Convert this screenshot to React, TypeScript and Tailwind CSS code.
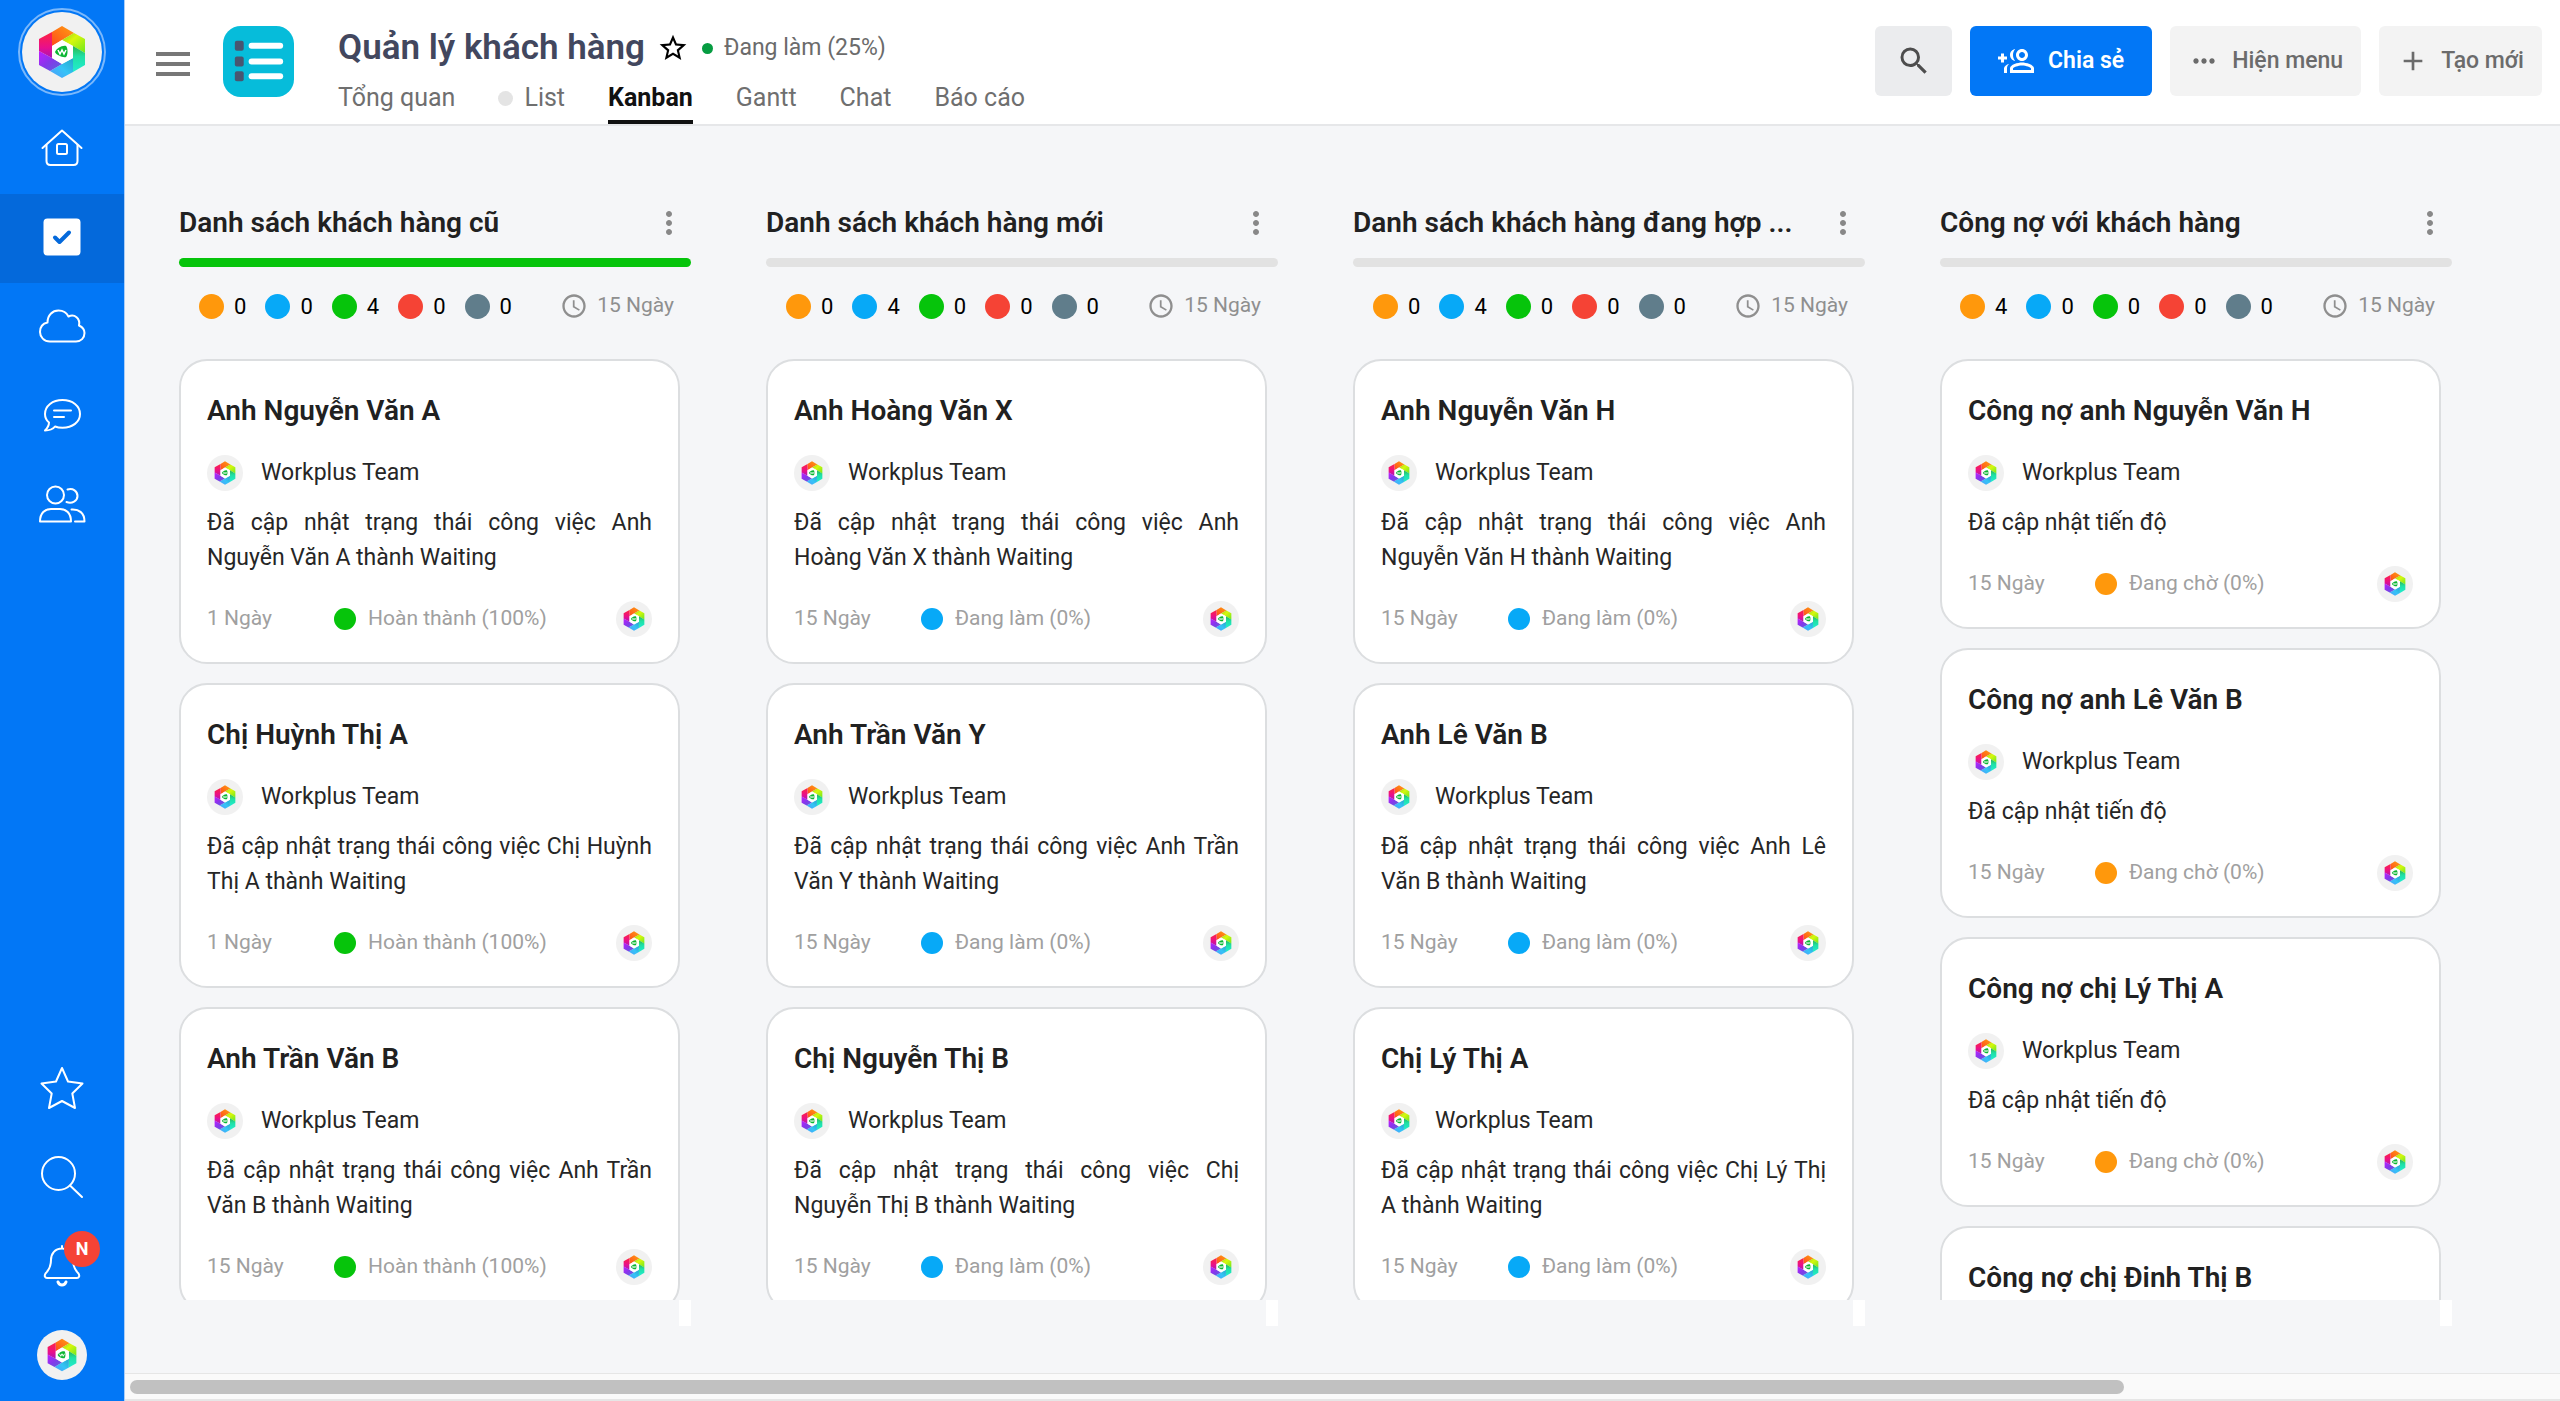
import React from 'react';
import { MdOutlineGroupAdd, MdSearch, MdMoreHoriz, MdStarBorder, MdAdd, MdMoreVert, MdAccessTime } from 'react-icons/md';

type Status = 'waiting' | 'doing' | 'done' | 'late' | 'paused';

interface Task {
  title: string;
  message: string;
  days: string;
}

interface Column {
  title: string;
  counts: [number, number, number, number, number];
  done?: boolean;
  status: Status;
  label: string;
  tasks: Task[];
}

const DOTS: Record<Status, string> = {
  waiting: 'bg-[#ff980c]',
  doing: 'bg-[#07a9f7]',
  done: 'bg-[#06c40b]',
  late: 'bg-[#f54335]',
  paused: 'bg-[#607d8b]'
};

const STATUSES: Status[] = ['waiting', 'doing', 'done', 'late', 'paused'];

const COLUMNS: Column[] = [
  {
    title: 'Danh sách khách hàng cũ',
    counts: [0, 0, 4, 0, 0],
    done: true,
    status: 'done',
    label: 'Hoàn thành (100%)',
    tasks: [
      { title: 'Anh Nguyễn Văn A', message: 'Đã cập nhật trạng thái công việc Anh Nguyễn Văn A thành Waiting', days: '1 Ngày' },
      { title: 'Chị Huỳnh Thị A', message: 'Đã cập nhật trạng thái công việc Chị Huỳnh Thị A thành Waiting', days: '1 Ngày' },
      { title: 'Anh Trần Văn B', message: 'Đã cập nhật trạng thái công việc Anh Trần Văn B thành Waiting', days: '15 Ngày' }
    ]
  },
  {
    title: 'Danh sách khách hàng mới',
    counts: [0, 4, 0, 0, 0],
    status: 'doing',
    label: 'Đang làm (0%)',
    tasks: [
      { title: 'Anh Hoàng Văn X', message: 'Đã cập nhật trạng thái công việc Anh Hoàng Văn X thành Waiting', days: '15 Ngày' },
      { title: 'Anh Trần Văn Y', message: 'Đã cập nhật trạng thái công việc Anh Trần Văn Y thành Waiting', days: '15 Ngày' },
      { title: 'Chị Nguyễn Thị B', message: 'Đã cập nhật trạng thái công việc Chị Nguyễn Thị B thành Waiting', days: '15 Ngày' }
    ]
  },
  {
    title: 'Danh sách khách hàng đang hợp ...',
    counts: [0, 4, 0, 0, 0],
    status: 'doing',
    label: 'Đang làm (0%)',
    tasks: [
      { title: 'Anh Nguyễn Văn H', message: 'Đã cập nhật trạng thái công việc Anh Nguyễn Văn H thành Waiting', days: '15 Ngày' },
      { title: 'Anh Lê Văn B', message: 'Đã cập nhật trạng thái công việc Anh Lê Văn B thành Waiting', days: '15 Ngày' },
      { title: 'Chị Lý Thị A', message: 'Đã cập nhật trạng thái công việc Chị Lý Thị A thành Waiting', days: '15 Ngày' }
    ]
  },
  {
    title: 'Công nợ với khách hàng',
    counts: [4, 0, 0, 0, 0],
    status: 'waiting',
    label: 'Đang chờ (0%)',
    tasks: [
      { title: 'Công nợ anh Nguyễn Văn H', message: 'Đã cập nhật tiến độ', days: '15 Ngày' },
      { title: 'Công nợ anh Lê Văn B', message: 'Đã cập nhật tiến độ', days: '15 Ngày' },
      { title: 'Công nợ chị Lý Thị A', message: 'Đã cập nhật tiến độ', days: '15 Ngày' },
      { title: 'Công nợ chị Đinh Thị B', message: 'Đã cập nhật tiến độ', days: '15 Ngày' }
    ]
  }
];

const TABS = ['Tổng quan', 'List', 'Kanban', 'Gantt', 'Chat', 'Báo cáo'];

const Logo: React.FC<{ className: string }> = ({ className }) => (
  <svg viewBox="0 0 80 80" className={className} aria-hidden="true">
    <defs>
      <linearGradient id="lg-top" x1="0" y1="1" x2="1" y2="0">
        <stop offset="0" stopColor="#ff4a1c" />
        <stop offset="1" stopColor="#ffa010" />
      </linearGradient>
      <linearGradient id="lg-tr" x1="0" y1="0" x2="1" y2="1">
        <stop offset="0" stopColor="#8fd018" />
        <stop offset="0.4" stopColor="#d9f70c" />
        <stop offset="1" stopColor="#6ce81e" />
      </linearGradient>
      <linearGradient id="lg-right" x1="0" y1="0" x2="0" y2="1">
        <stop offset="0" stopColor="#2cb54a" />
        <stop offset="0.4" stopColor="#1fe0a4" />
        <stop offset="1" stopColor="#22ecd0" />
      </linearGradient>
      <linearGradient id="lg-br" x1="1" y1="0" x2="0" y2="1">
        <stop offset="0" stopColor="#23a9c8" />
        <stop offset="0.5" stopColor="#35c3f7" />
        <stop offset="1" stopColor="#4f9bfb" />
      </linearGradient>
      <linearGradient id="lg-bl" x1="1" y1="1" x2="0" y2="0">
        <stop offset="0" stopColor="#5468dc" />
        <stop offset="0.5" stopColor="#8438ea" />
        <stop offset="1" stopColor="#c01cff" />
      </linearGradient>
      <linearGradient id="lg-left" x1="0" y1="0" x2="0" y2="1">
        <stop offset="0" stopColor="#ff2440" />
        <stop offset="0.6" stopColor="#e80f8c" />
        <stop offset="1" stopColor="#a814b8" />
      </linearGradient>
    </defs>
    <circle cx="40" cy="40" r="40" fill="#f1f1f1" />
    <path d="M30 20 40 14 52 21 40 28 30 34z" fill="url(#lg-top)" />
    <path d="M52 21 63 27V41L51 34 40 28z" fill="url(#lg-tr)" />
    <path d="M63 41V53L51 60V34z" fill="url(#lg-right)" />
    <path d="M51 60 40 66 28 59 40 52 51 46z" fill="url(#lg-br)" />
    <path d="M28 59 17 53V39L30 46 40 52z" fill="url(#lg-bl)" />
    <path d="M17 39V27L30 20V46z" fill="url(#lg-left)" />
    <path d="M40 28 51 34V46L40 52 30 46V34z" fill="#fff" />
    <path d="M33 40C34 37 40 33 44 34 46 36 46 43 44 45 41 46 34 43 33 40z" fill="#0bb632" />
    <path d="M36 38l2 4 2-4 2 4 2-4" fill="none" stroke="#fff" strokeWidth="1.500" />
  </svg>
);

const HomeIcon = () => (
  <svg viewBox="0 0 48 48" className="size-12" fill="none" stroke="#fff" strokeWidth="2" strokeLinecap="round" strokeLinejoin="round">
    <path d="M4.500 24 24 6.500 43.500 24" />
    <path d="M8.500 21V37q0 4 4 4H35.500q4 0 4-4V21" />
    <rect x="19" y="20" width="10" height="10" rx="1.500" />
  </svg>
);

const CheckIcon = () => (
  <svg viewBox="0 0 48 48" className="size-12">
    <rect x="5.500" y="5.500" width="37" height="37" rx="4" fill="#fff" />
    <path d="M17 24.500 21.500 29 31 19.500" fill="none" stroke="#0469db" strokeWidth="4" strokeLinecap="round" strokeLinejoin="round" />
  </svg>
);

const CloudIcon = () => (
  <svg viewBox="0 0 48 48" className="size-12" fill="none" stroke="#fff" strokeWidth="2" strokeLinejoin="round">
    <path d="M12 39.500C6 39.500 2 35 2 30 2 25 5 21.500 9.500 20.500 9.500 13 14.500 8.500 20.500 8.500 25 8.500 28.500 10.500 30.500 14.500 36.500 11.500 42.500 16.500 41 23.500 44.500 25 46.500 28 46.500 31 46.500 36 43 39.500 38 39.500z" />
  </svg>
);

const ChatIcon = () => (
  <svg viewBox="0 0 48 48" className="size-12" fill="none" stroke="#fff" strokeWidth="2" strokeLinejoin="round" strokeLinecap="round">
    <path d="M24.500 9C14.500 9 7 15 7 23 7 26.500 8.500 29.500 11 31.500 11 34.500 9.500 37 7 39.500 11 39.500 15 38 17 35.500 19 36.300 22 36.800 24.500 36.800 34.500 36.800 42 31 42 23 42 15 34.500 9 24.500 9z" />
    <path d="M16 19.500H33M16 26H26" />
  </svg>
);

const PeopleIcon = () => (
  <svg viewBox="0 0 48 48" className="size-12" fill="none" stroke="#fff" strokeWidth="2" strokeLinejoin="round" strokeLinecap="round">
    <circle cx="17.500" cy="15" r="8.500" />
    <path d="M2 41.500C2 33 7 29 13 29H22C28 29 33 33 33 41.500z" />
    <path d="M29.500 9.500C35 8 39.500 11 39.500 16 39.500 21 34 24 28.500 22" />
    <path d="M33.500 29.500C41 29 46.500 33 46.500 41.500H37" />
  </svg>
);

const StarIcon = () => (
  <svg viewBox="0 0 48 48" className="size-12" fill="none" stroke="#fff" strokeWidth="2" strokeLinejoin="round">
    <path d="M24 4 30 17.500 44.500 19.500 34.300 29.500 37 44 24 37 11 44 13.700 29.500 3.500 19.500 18 17.500z" />
  </svg>
);

const SearchIcon = () => (
  <svg viewBox="0 0 48 48" className="size-12" fill="none" stroke="#fff" strokeWidth="2" strokeLinecap="round">
    <circle cx="20.500" cy="20.500" r="16.500" />
    <path d="M32 32.500 44 44" />
  </svg>
);

const BellIcon = () => (
  <svg viewBox="0 0 48 48" className="size-12" fill="none" stroke="#fff" strokeWidth="2" strokeLinecap="round" strokeLinejoin="round">
    <path d="M24 4V6.500C17 6.500 13 11.500 13 18 13 25 11 28 7.500 31.500 6 34 7 36 9 36H39C41 36 42 34 40.500 31.500 37 28 35 25 35 18 35 11.500 31 6.500 24 6.500" />
    <path d="M20 40C21.500 44 26.500 44 28 40" strokeWidth="3" />
  </svg>
);

const ListAppIcon = () => (
  <svg viewBox="0 0 72 72" className="size-[71px]" aria-hidden="true">
    <rect width="72" height="72" rx="18" fill="#06bcda" />
    {[15, 31, 46].map((y) => (
      <g key={y}>
        <rect x="12" y={y} width="9" height="10" rx="2" fill="#485670" />
        <rect x="26" y={y + 2} width="35" height="6" rx="3" fill="#fff" />
      </g>
    ))}
  </svg>
);

const NavButton: React.FC<{ label: string; active?: boolean; children: React.ReactNode }> = ({ label, active, children }) => (
  <button aria-label={label} className={`flex h-[89px] w-full items-center justify-center pb-[3px] ${active ? 'bg-[#0469db]' : ''}`}>
    {children}
  </button>
);

const Sidebar = () => (
  <aside className="flex w-[125px] shrink-0 flex-col justify-between border-r border-[#a9cdf8] bg-[#0277f6]">
    <nav>
      <div className="flex h-[105px] items-center justify-center pb-[2px]">
        <div className="flex size-[88px] items-center justify-center rounded-full border-2 border-[#7bb8fb]">
          <Logo className="size-20" />
        </div>
      </div>
      <NavButton label="Trang chủ"><HomeIcon /></NavButton>
      <NavButton label="Công việc" active><CheckIcon /></NavButton>
      <NavButton label="Lưu trữ"><CloudIcon /></NavButton>
      <NavButton label="Trò chuyện"><ChatIcon /></NavButton>
      <NavButton label="Thành viên"><PeopleIcon /></NavButton>
    </nav>
    <nav>
      <NavButton label="Yêu thích"><StarIcon /></NavButton>
      <NavButton label="Tìm kiếm"><SearchIcon /></NavButton>
      <NavButton label="Thông báo">
        <span className="relative">
          <BellIcon />
          <span className="absolute -top-[11px] -right-[14px] flex size-9 items-center justify-center rounded-full bg-[#f54335] text-lg font-bold text-white">N</span>
        </span>
      </NavButton>
      <NavButton label="Tài khoản"><Logo className="size-[50px]" /></NavButton>
    </nav>
  </aside>
);

const Header = () => (
  <header className="flex h-[126px] shrink-0 items-start justify-between border-b-2 border-[#e6e7e9] bg-white pr-[18px] pl-[31px]">
    <div className="flex items-start">
      <button aria-label="Menu" className="mt-[52px] flex w-[34px] flex-col gap-[6px]">
        <span className="h-1 w-full bg-[#777]" />
        <span className="h-1 w-full bg-[#777]" />
        <span className="h-1 w-full bg-[#777]" />
      </button>
      <div className="mt-[26px] ml-[33px]">
        <ListAppIcon />
      </div>
      <div className="ml-11 flex h-[124px] flex-col justify-between pt-[25px]">
        <div className="flex items-center">
          <h1 className="text-[35px] leading-[46px] font-semibold text-[#42475e]">Quản lý khách hàng</h1>
          <button aria-label="Đánh dấu" className="ml-3">
            <MdStarBorder className="size-8 text-black" />
          </button>
          <span className="ml-[13px] size-[11px] rounded-full bg-[#069c41]" />
          <span className="ml-[11px] text-[23px] text-[#6b6b6b]">Đang làm (25%)</span>
        </div>
        <nav className="flex gap-[43px]">
          {TABS.map((tab) => (
            <a
              key={tab}
              href="#"
              className={`flex h-[42px] items-start text-[25px] leading-[32px] ${tab === 'Kanban' ? 'border-b-4 border-[#111] font-bold text-[#111]' : 'text-[#6f6f6f]'}`}
            >
              {tab === 'List' && <span className="mt-[9px] mr-[11px] size-[15px] rounded-full bg-[#e4e4e4]" />}
              {tab}
            </a>
          ))}
        </nav>
      </div>
    </div>
    <div className="mt-[26px] flex gap-[18px] text-[23px] font-medium">
      <button aria-label="Tìm kiếm" className="flex h-[70px] w-[77px] items-center justify-center rounded-md bg-[#ebecee] text-[#4d4d4d]">
        <MdSearch className="size-9" />
      </button>
      <button className="flex h-[70px] items-center gap-[14px] rounded-md bg-[#0277f6] px-7 font-semibold text-white">
        <MdOutlineGroupAdd className="size-9 -scale-x-100" />
        Chia sẻ
      </button>
      <button className="flex h-[70px] items-center gap-3 rounded-md bg-[#f3f3f3] px-[18px] text-[#6b6b6b]">
        <MdMoreHoriz className="size-8" />
        Hiện menu
      </button>
      <button className="flex h-[70px] items-center gap-3 rounded-md bg-[#f3f3f3] px-[18px] text-[#6b6b6b]">
        <MdAdd className="size-8" />
        Tạo mới
      </button>
    </div>
  </header>
);

const TaskCard: React.FC<{ task: Task; column: Column }> = ({ task, column }) => (
  <article className="shrink-0 rounded-[28px] border-2 border-[#dcdee0] bg-white px-[26px] pt-[30px] pb-[25px]">
    <h3 className="text-[28px] leading-10 font-semibold text-[#212121]">{task.title}</h3>
    <div className="mt-6 flex items-center gap-[18px]">
      <Logo className="size-9" />
      <span className="text-[23px] text-[#262626]">Workplus Team</span>
    </div>
    <p className="mt-[14px] text-justify text-[23px] leading-[35px] text-[#262626]">{task.message}</p>
    <div className="mt-[26px] flex items-center text-[21px] text-[#a0a0a0]">
      <span className="w-[127px]">{task.days}</span>
      <span className={`size-[22px] rounded-full ${DOTS[column.status]}`} />
      <span className="ml-3">{column.label}</span>
      <Logo className="ml-auto size-9" />
    </div>
  </article>
);

const KanbanColumn: React.FC<{ column: Column }> = ({ column }) => (
  <section className="flex w-[512px] shrink-0 flex-col">
    <div className="flex h-10 shrink-0 items-center justify-between pr-1">
      <h2 className="truncate text-[28px] leading-10 font-semibold text-[#212121]">{column.title}</h2>
      <button aria-label="Tùy chọn"><MdMoreVert className="size-9 text-[#888]" /></button>
    </div>
    <div className={`mt-[15px] h-[9px] shrink-0 rounded-full ${column.done ? 'bg-[#06c40b]' : 'bg-[#e2e2e2]'}`} />
    <div className="mt-[19px] flex h-10 shrink-0 items-center pr-[17px] pl-5 text-[22px]">
      <div className="flex gap-[19px]">
        {STATUSES.map((status, i) => (
          <span key={status} className="flex items-center gap-[10px] text-black">
            <span className={`size-[25px] rounded-full ${DOTS[status]}`} />
            {column.counts[i]}
          </span>
        ))}
      </div>
      <span className="ml-auto flex items-center gap-[9px] text-[#8f8f8f]">
        <MdAccessTime className="size-7" />
        <span className="text-[21px]">15 Ngày</span>
      </span>
    </div>
    <div className="mt-[33px] flex min-h-0 flex-1 flex-col gap-[19px] overflow-y-auto pr-[11px] [scrollbar-width:none]">
      {column.tasks.map((task) => (
        <TaskCard key={task.title} task={task} column={column} />
      ))}
    </div>
    <div className="flex h-[26px] shrink-0 justify-end">
      <div className="w-3 bg-white" />
    </div>
  </section>
);

const App = () => (
  <div className="flex h-screen overflow-hidden bg-[#f5f6f8] font-[Roboto,sans-serif]">
    <Sidebar />
    <div className="flex min-w-0 flex-1 flex-col">
      <Header />
      <main className="flex min-h-0 flex-1 gap-[75px] overflow-hidden px-[54px] pt-[77px] pb-[47px]">
        {COLUMNS.map((column) => (
          <KanbanColumn key={column.title} column={column} />
        ))}
      </main>
      {/* Scrollbar */}
      <div className="h-7 shrink-0 border-t border-b-2 border-[#e6e6e6] bg-[#fafafa] px-[5px] pt-[6px]">
        <div className="h-[14px] w-[calc(82%+5px)] rounded-full bg-[#c1c1c1]" />
      </div>
    </div>
  </div>
);

export default App;
